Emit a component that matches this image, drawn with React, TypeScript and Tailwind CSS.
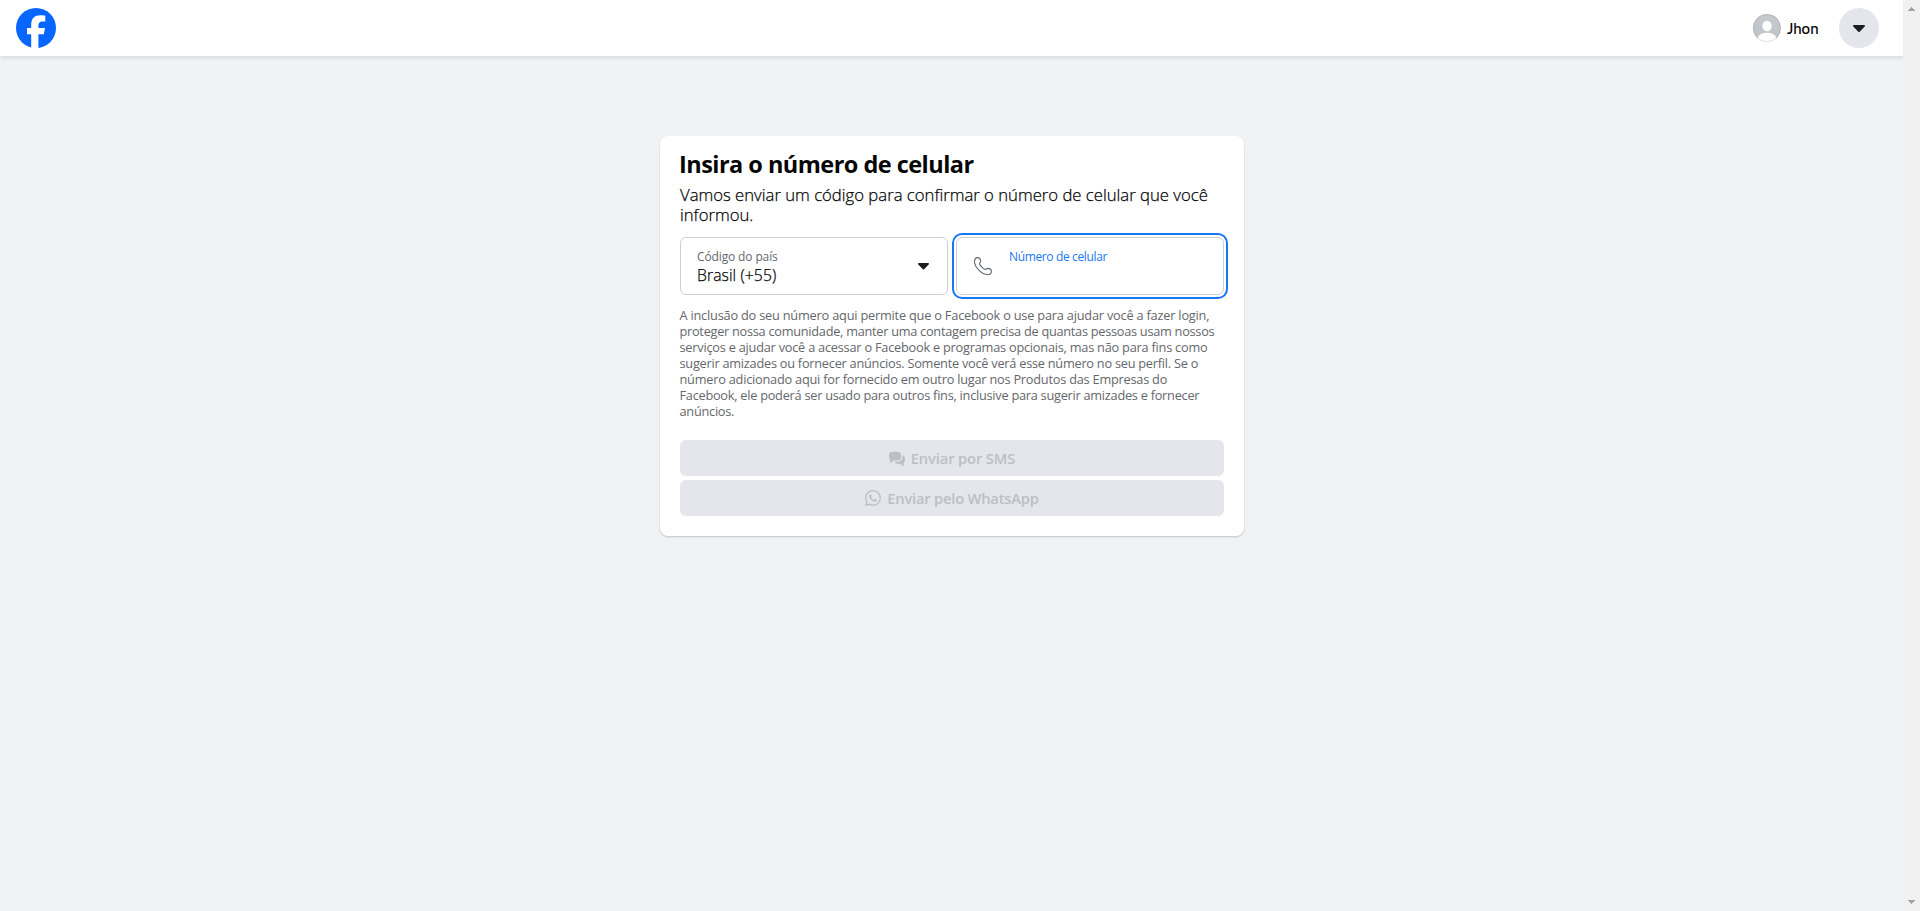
import React from "react";
import { BsWhatsapp } from "react-icons/bs";

function FacebookLogo() {
  return (
    <svg className="size-10" viewBox="0 0 40 40">
      <circle cx="20" cy="20" r="20" fill="#0866ff" />
      <path
        fill="#fff"
        d="M15.2 40V26.2H11V20h4.2v-2.7c0-6.9 3.1-10 9.8-10 1.3 0 3.5.2 4.3.5v5.7c-.5-.1-1.3-.1-2.3-.1-3.3 0-4.6 1.2-4.6 4.5V20H29l-1.2 6.2h-5.4V40z"
      />
    </svg>
  );
}

function Avatar() {
  return (
    <svg className="size-7" viewBox="0 0 28 28">
      <defs>
        <linearGradient id="avatar-bg" x1="0" y1="0" x2="0" y2="1">
          <stop offset="0" stopColor="#c6c9ce" />
          <stop offset="1" stopColor="#bfc3c8" />
        </linearGradient>
        <clipPath id="avatar-clip">
          <circle cx="14" cy="14" r="14" />
        </clipPath>
      </defs>
      <g clipPath="url(#avatar-clip)">
        <rect width="28" height="28" fill="url(#avatar-bg)" />
        <ellipse cx="14" cy="12" rx="4.7" ry="5.3" fill="#fff" />
        <path d="M4.500 28v-3c0-3.600 4-6.300 9.500-6.300s9.500 2.700 9.500 6.300v3z" fill="#fff" />
        <circle cx="14" cy="14" r="13.5" fill="none" stroke="#000" strokeOpacity=".1" />
      </g>
    </svg>
  );
}

function Caret({ className }: { className: string }) {
  return (
    <svg className={className} viewBox="0 0 12 8">
      <path fill="#1c1e21" d="M.9 0h10.2c.8 0 1.2 1 .6 1.6L6.7 6.7a1 1 0 0 1-1.4 0L.3 1.600C-.3 1 .1 0 .9 0z" />
    </svg>
  );
}

function PhoneIcon() {
  return (
    <svg className="size-5" viewBox="0 0 20 20" fill="none" stroke="#606770" strokeWidth="1.1" strokeLinejoin="round">
      <path d="M4.600 1.600c1.700 0 2.900 1.600 3 3.500 0 1.100-.8 1.500-1 2.400-.3 1.400 4.500 6.200 5.900 5.900.9-.2 1.300-1 2.400-1 1.900.1 3.500 1.300 3.500 3s-1.700 3.100-4 3.100C8.800 18.500 1.500 11.200 1.500 5.600c0-2.300 1.400-4 3.100-4z" />
    </svg>
  );
}

function ChatIcon() {
  return (
    <svg className="mt-0.5 size-4" viewBox="0 0 16 16" fill="currentColor">
      <path d="M3.500 0.700h5.200a3.500 3.500 0 0 1 3.500 3.500v1.900a3.500 3.500 0 0 1-3.500 3.500H4.600L1.700 11.900c-.4.300-.8.100-.8-.4l.2-2.900A3.500 3.500 0 0 1 0 6.100V4.200A3.500 3.500 0 0 1 3.500.700z" />
      <path d="M13.400 4.300c1.600.3 2.600 1.400 2.600 3v1.500c0 1.300-.5 2.200-1.400 2.800l.2 3c0 .5-.4.700-.8.400l-3-2.300H8.500c-1.500 0-2.700-.7-3.200-1.900h3.600c2.700 0 4.600-2 4.600-4.500z" />
    </svg>
  );
}

const disclosure = [
  { text: "A inclusão do seu número aqui permite que o Facebook o use para ajudar você a fazer login,", tracking: "tracking-[-0.2px]" },
  { text: "proteger nossa comunidade, manter uma contagem precisa de quantas pessoas usam nossos", tracking: "tracking-[-0.27px]" },
  { text: "serviços e ajudar você a acessar o Facebook e programas opcionais, mas não para fins como", tracking: "tracking-[-0.225px]" },
  { text: "sugerir amizades ou fornecer anúncios. Somente você verá esse número no seu perfil. Se o", tracking: "tracking-[-0.245px]" },
  { text: "número adicionado aqui for fornecido em outro lugar nos Produtos das Empresas do", tracking: "tracking-[-0.225px]" },
  { text: "Facebook, ele poderá ser usado para outros fins, inclusive para sugerir amizades e fornecer", tracking: "tracking-[-0.255px]" },
  { text: "anúncios.", tracking: "tracking-[-0.25px]" },
];

const buttonClass =
  "flex h-9 w-full items-center justify-center gap-1.5 rounded-md bg-[#e4e6eb] text-[14.7px] leading-5 font-semibold text-[#bcc0c4]";

export default function App() {
  return (
    <div className="flex h-[911px] w-full overflow-hidden bg-[#f0f2f5] font-['Open_Sans','Noto_Sans',sans-serif] text-[#050505]">
      <div className="flex min-w-0 flex-1 flex-col">
        <header className="flex h-14 shrink-0 items-center justify-between bg-white pr-6 pl-4 shadow-[0_2px_4px_rgba(0,0,0,0.1)]">
          <FacebookLogo />
          <div className="flex items-center">
            <Avatar />
            <span className="ml-[6px] w-8 font-[Lato,'Open_Sans',sans-serif] text-[15px] leading-5 font-medium">
              Jhon
            </span>
            <button className="ml-5 flex size-10 items-center justify-center rounded-full bg-[#e4e6eb]">
              <Caret className="mt-px h-2 w-3" />
            </button>
          </div>
        </header>

        <main className="flex justify-center pt-20 pl-[1px]">
          <section className="h-[400px] w-[584px] rounded-lg bg-white px-5 pt-[14px] shadow-[0_1px_2px_rgba(0,0,0,0.2)]">
            <h1 className="-ml-px text-[23.5px] leading-7 font-bold tracking-[-0.53px] whitespace-nowrap">
              Insira o número de celular
            </h1>
            <p className="mt-[7px] text-[16.7px] leading-5 font-light whitespace-nowrap [-webkit-text-stroke:0.25px]">
              Vamos enviar um código para confirmar o número de celular que você
              <br />
              informou.
            </p>

            <div className="mt-3 flex gap-2">
              <div className="flex h-[58px] w-[268px] items-center justify-between rounded-md border border-[#ccd0d5] pr-[18px] pl-4">
                <div className="flex flex-col pt-px">
                  <span className="text-[12px] leading-4 tracking-[-0.13px] text-[#65676b]">Código do país</span>
                  <span className="text-[15.7px] leading-5 font-light tracking-[0.1px] [-webkit-text-stroke:0.25px]">
                    Brasil (+55)
                  </span>
                </div>
                <Caret className="mt-0.5 h-[7.5px] w-[11px]" />
              </div>
              <div className="flex h-[58px] w-[268px] items-center rounded-md border border-[#ccd0d5] pl-4 outline-2 outline-offset-[2px] outline-[#1877f2]">
                <PhoneIcon />
                <div className="ml-4 flex h-9 flex-col pt-px">
                  <span className="text-[12px] leading-4 tracking-[-0.36px] text-[#1877f2]">Número de celular</span>
                </div>
              </div>
            </div>

            <p className="mt-3 -ml-[0.5px] flex flex-col text-[12.75px] leading-4 whitespace-nowrap text-[#65676b]">
              {disclosure.map((line) => (
                <span key={line.text} className={line.tracking}>
                  {line.text}
                </span>
              ))}
            </p>

            <div className="mt-[21px] flex flex-col gap-1">
              <button className={buttonClass}>
                <ChatIcon />
                <span className="tracking-[-0.12px]">Enviar por SMS</span>
              </button>
              <button className={buttonClass}>
                <BsWhatsapp className="size-4" />
                <span className="tracking-[-0.2px]">Enviar pelo WhatsApp</span>
              </button>
            </div>
          </section>
        </main>
      </div>

      <div className="flex w-[17px] shrink-0 flex-col items-center justify-between bg-[#f1f1f1] pt-[7px] pb-[7px]">
        <svg className="h-1 w-[7px]" viewBox="0 0 7 4" shapeRendering="crispEdges">
          <path d="M3 0h1v1h1v1h1v1h1v1H0V3h1V2h1V1h1z" fill="#a3a3a3" />
        </svg>
        <svg className="h-1 w-[7px]" viewBox="0 0 7 4" shapeRendering="crispEdges">
          <path d="M0 0h7v1H6v1H5v1H4v1H3V3H2V2H1V1H0z" fill="#a3a3a3" />
        </svg>
      </div>
    </div>
  );
}
